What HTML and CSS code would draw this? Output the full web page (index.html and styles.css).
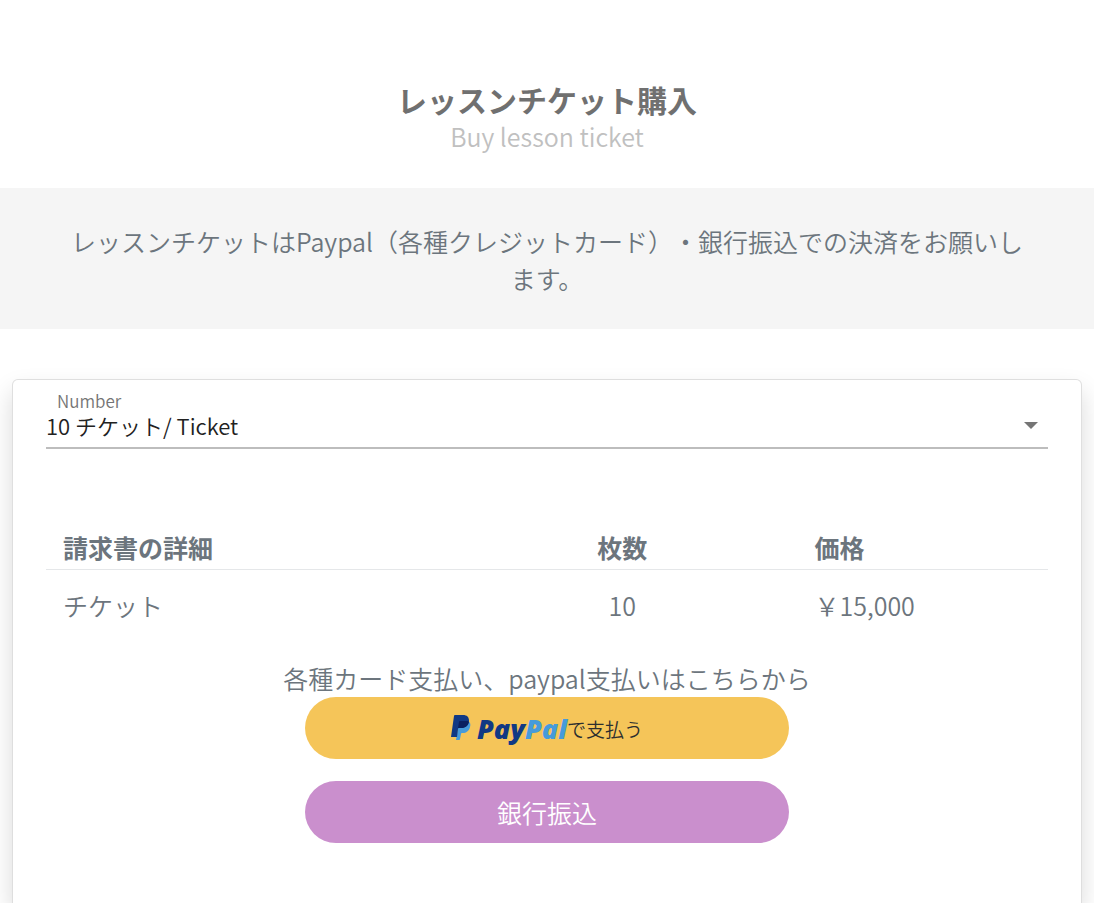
FILE: index.html
```html
<!DOCTYPE html>
<html lang="ja">
<head>
    <meta charset="UTF-8">
    <meta name="viewport" content="width=device-width, initial-scale=1.0">
    <title>レッスンチケット購入</title>
    <link rel="stylesheet" href="styles.css">
</head>
<body>
    <main class="page">
        <header class="page-header">
            <h1 class="page-title">レッスンチケット購入</h1>
            <p class="page-subtitle">Buy lesson ticket</p>
        </header>

        <section class="notice">
            <p>レッスンチケットはPaypal（各種クレジットカード）・銀行振込での決済をお願いします。</p>
        </section>

        <section class="card">
            <div class="field">
                <label for="ticket-number">Number</label>
                <div class="select-wrap">
                    <select id="ticket-number">
                        <option>10 チケット/ Ticket</option>
                    </select>
                    <svg class="select-arrow" width="14" height="7" viewBox="0 0 14 7" aria-hidden="true"><path d="M0 0h14L7 7z" fill="#757575"/></svg>
                </div>
            </div>

            <table class="invoice">
                <thead>
                    <tr>
                        <th class="col-item">請求書の詳細</th>
                        <th class="col-count">枚数</th>
                        <th class="col-price">価格</th>
                    </tr>
                </thead>
                <tbody>
                    <tr>
                        <td>チケット</td>
                        <td class="col-count">10</td>
                        <td>￥15,000</td>
                    </tr>
                </tbody>
            </table>

            <div class="payment">
                <p>各種カード支払い、paypal支払いはこちらから</p>
                <button type="button" class="btn btn-paypal">
                    <svg class="paypal-mark" width="20" height="26" viewBox="0 0 20 26" aria-hidden="true">
                        <path d="M8 6h9c2 1 3 3 2 6-1 4-4 6-7 6h-1q-1 0-1 1l-1 5q0 1-1 1H5l1-6z" fill="#469bdb"/>
                        <path d="M4 0h8c4 0 6 2 6 6-1 5-4 7-8 7H8q-1 0-1 1L6 22H0L3 1q0-1 1-1z" fill="#113984"/>
                        <path d="M9 6h8l1 1c-1 4-4 6-8 6H7L8 7q0-1 1-1z" fill="#0b2060"/>
                    </svg>
                    <span class="paypal-word"><span class="pay">Pay</span><span class="pal">Pal</span></span>
                    <span class="paypal-text">で支払う</span>
                </button>
                <button type="button" class="btn btn-bank">銀行振込</button>
            </div>
        </section>
    </main>
</body>
</html>
```
FILE: styles.css
```css
* {
    box-sizing: border-box;
}

body {
    margin: 0;
    background: #fff;
    color: #6c757d;
    font-family: "Noto Sans CJK JP", sans-serif;
    font-size: 25px;
    font-weight: 350;
    line-height: 37px;
    text-spacing-trim: space-all;
}

h1, p {
    margin: 0;
}

.page {
    display: flex;
    flex-direction: column;
    height: calc(100vh - 15px);
    overflow: hidden;
}

.page-header {
    padding: 80px 12px 33px;
    text-align: center;
}

.page-title {
    color: #707070;
    font-size: 30px;
    font-weight: bold;
    line-height: 38px;
}

.page-subtitle {
    color: #c0c0c0;
}

.notice {
    padding: 35px 66px 32px;
    background: #f5f5f5;
    text-align: center;
}

.card {
    flex: 1 0 auto;
    margin: 50px 12px 0;
    padding: 12px 33px 60px;
    border: 1px solid rgba(0, 0, 0, 0.125);
    border-bottom: 0;
    border-radius: 6px 6px 0 0;
    background: #fff;
    box-shadow: 0 12px 24px rgba(0, 0, 0, 0.15);
}

.field label {
    display: block;
    padding-left: 11px;
    color: #757575;
    font-size: 17px;
    line-height: 17px;
}

.select-wrap {
    position: relative;
    padding-bottom: 6px;
    border-bottom: 2px solid #bdbdbd;
}

.select-wrap select {
    display: block;
    width: 100%;
    height: 32px;
    padding: 0 32px 0 0;
    border: 0;
    appearance: none;
    background: transparent;
    color: #212121;
    font-family: inherit;
    font-size: 22px;
    font-weight: inherit;
}

.select-arrow {
    position: absolute;
    top: 13px;
    right: 10px;
    pointer-events: none;
}

.invoice {
    width: 100%;
    margin-top: 79px;
    border-collapse: collapse;
    text-align: left;
}

.invoice th,
.invoice td {
    padding: 0 17px;
}

.invoice th {
    height: 41px;
    padding-bottom: 2px;
    border-bottom: 1px solid #e5e7e9;
}

.invoice td {
    height: 72px;
}

.invoice .col-item {
    width: 40%;
}

.invoice .col-count {
    width: 35%;
    text-align: center;
}

.invoice .col-price {
    width: 25%;
}

.payment {
    display: flex;
    flex-direction: column;
    align-items: center;
    margin-top: 19px;
}

.btn {
    display: flex;
    align-items: center;
    justify-content: center;
    width: 484px;
    max-width: 100%;
    height: 62px;
    padding: 0;
    border: 0;
    border-radius: 31px;
    font-family: inherit;
    font-weight: inherit;
    cursor: pointer;
}

.btn-paypal {
    background: #f5c559;
    color: #2c2e2f;
}

.paypal-mark {
    margin-right: 6px;
}

.paypal-word {
    font-family: "Open Sans", sans-serif;
    font-size: 27px;
    font-style: italic;
    font-weight: 800;
}

.pay {
    color: #113984;
}

.pal {
    color: #469bdb;
}

.paypal-text {
    font-size: 19px;
}

.btn-bank {
    margin-top: 22px;
    background: #ca8fcd;
    color: #fff;
    font-size: 25px;
}
```
